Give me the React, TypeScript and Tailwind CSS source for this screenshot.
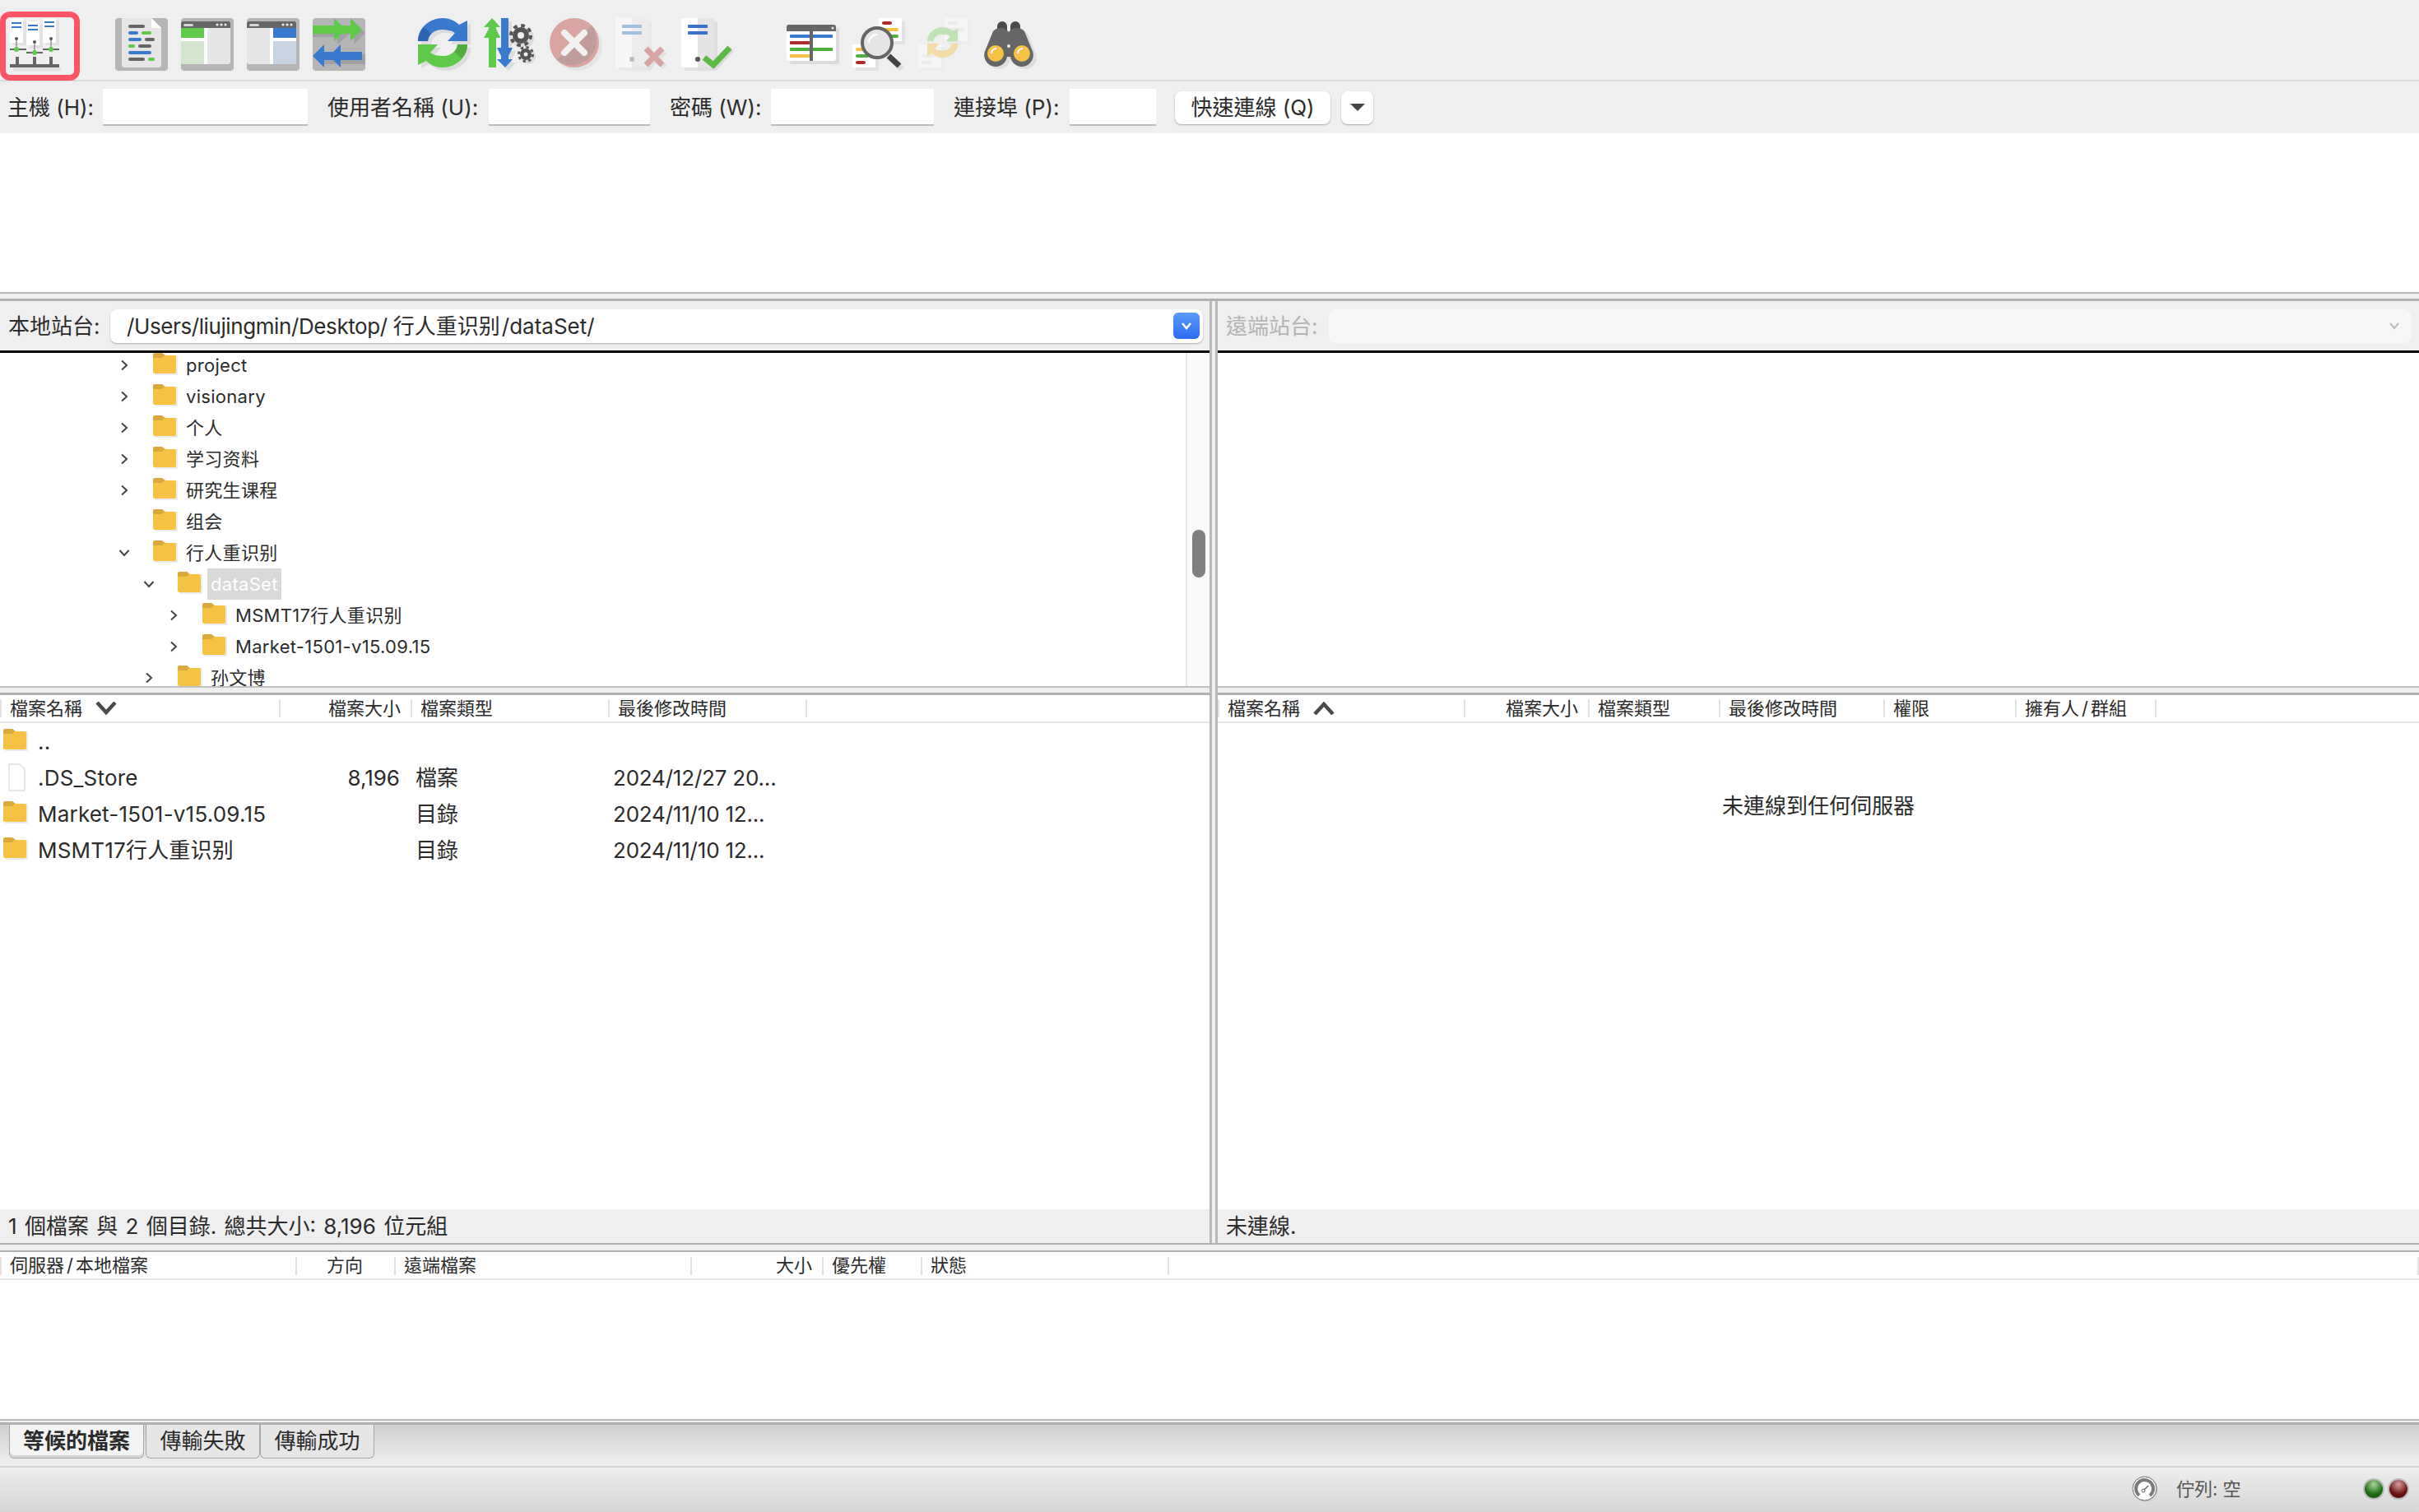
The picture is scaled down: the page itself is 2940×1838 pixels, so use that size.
import type { ReactNode } from "react"

const Folder = ({ className = "" }: { className?: string }) => (
    <svg width="30" height="27" viewBox="0 0 30 27" className={className}>
        <rect x="2" y="3" width="28" height="24" fill="#ececec" />
        <path d="M0 2a2 2 0 0 1 2-2h9l4 3v4H0z" fill="#dba93a" />
        <path d="M0 6h11l3-3h12a2 2 0 0 1 2 2v18a2 2 0 0 1-2 2H2a2 2 0 0 1-2-2z" fill="#f6c244" />
    </svg>
)

const Chevron = ({ open }: { open?: boolean }) => (
    <svg width="14" height="14" viewBox="0 0 14 14" fill="none" stroke="#444" strokeWidth="2">
        {open ? <path d="M1.5 4l5.5 6 5.5-6" /> : <path d="M4 1.5l6 5.5-6 5.5" />}
    </svg>
)

const SortArrow = ({ up }: { up?: boolean }) => (
    <svg width="26" height="16" viewBox="0 0 26 16" fill="none" stroke="#4a4a4a" strokeWidth="4.5">
        {up ? <path d="M2 15l11-12 11 12" /> : <path d="M2 1l11 12 11-12" />}
    </svg>
)

const SiteManagerIcon = () => (
    <svg width="64" height="64" viewBox="0 0 64 64">
        <path d="M6 3h16v30H6zM26 7h16v30H26zM46 3h16v30H46zM6 60h60v4H6z" fill="#e2e2e2" />
        <path d="M2 1h16v29H2zM42 1h16v29H42zM22 4h16v29H22z" fill="#fff" />
        <path d="M4 5h12v2H4zM4 10h12v2H4zM44 4h12v2H44zM44 9h12v2H44zM24 8h12v2H24zM24 13h12v2H24z" fill="#3a7ace" />
        <path d="M2 37h20v2H2zM42 37h20v2H42zM22 41h20v2H22zM9.5 25h1v13h-1zM51.5 25h1v13h-1zM31.5 29h1v13h-1zM9 47h4v9H9zM30 47h4v9h-4zM50 47h4v9h-4zM2 56h60v4H2z" fill="#666" />
        <circle cx="10" cy="25" r="2" fill="#555" />
        <circle cx="32" cy="29" r="2" fill="#555" />
        <circle cx="52" cy="25" r="2" fill="#555" />
        <circle cx="10" cy="38" r="3" fill="#5fc94a" />
        <circle cx="32" cy="42" r="3" fill="#5fc94a" />
        <circle cx="52" cy="38" r="3" fill="#5fc94a" />
    </svg>
)

const MessageLogIcon = () => (
    <svg width="64" height="64" viewBox="0 0 64 64">
        <rect width="64" height="64" rx="4" fill="#b5b5b5" />
        <path d="M8 0h36l12 12v45a3 3 0 0 1-3 3H11a3 3 0 0 1-3-3z" fill="#e6e6e6" />
        <path d="M44 0l12 12H44z" fill="#fff" />
        <rect x="16" y="8" width="20" height="4" rx="2" fill="#666" />
        <rect x="16" y="16" width="12" height="4" rx="2" fill="#3a7ace" />
        <rect x="32" y="16" width="12" height="4" rx="2" fill="#5fc94a" />
        <rect x="16" y="24" width="16" height="4" rx="2" fill="#3a7ace" />
        <rect x="36" y="24" width="12" height="4" rx="2" fill="#666" />
        <rect x="16" y="32" width="8" height="4" rx="2" fill="#5fc94a" />
        <rect x="28" y="32" width="16" height="4" rx="2" fill="#666" />
        <rect x="16" y="40" width="28" height="4" rx="2" fill="#3a7ace" />
        <rect x="16" y="48" width="20" height="4" rx="2" fill="#666" />
        <rect x="40" y="48" width="8" height="4" rx="2" fill="#5fc94a" />
    </svg>
)

const PaneIcon = ({ side }: { side: "left" | "right" }) => {
    const strong = side === "left" ? "#5fc94a" : "#3a7ace"
    const soft = side === "left" ? "#d4e6d0" : "#c8d4e2"
    const x = side === "left" ? 0 : 32
    return (
        <svg width="64" height="64" viewBox="0 0 64 64">
            <rect width="64" height="64" rx="4" fill="#b5b5b5" />
            <path d="M0 12h60v41a3 3 0 0 1-3 3H3a3 3 0 0 1-3-3z" fill="#e6e6e6" />
            <path d="M3 4h54a3 3 0 0 1 3 3v5H0V7a3 3 0 0 1 3-3z" fill="#666" />
            <rect x="3" y="7" width="12" height="3" rx="1.5" fill="#d5d5d5" />
            <circle cx="44" cy="8" r="1.5" fill="#eee" />
            <circle cx="49" cy="8" r="1.5" fill="#eee" />
            <circle cx="54" cy="8" r="1.5" fill="#eee" />
            <rect x={x} y="12" width="28" height="12" fill={strong} />
            <rect x={x} y="24" width="28" height="4" fill="#fff" />
            <path d={side === "left" ? "M0 28h28v28H3a3 3 0 0 1-3-3z" : "M32 28h28v25a3 3 0 0 1-3 3H32z"} fill={soft} />
            <rect x="28" y="12" width="4" height="44" fill="#fff" />
        </svg>
    )
}

const QueueArrowsIcon = () => (
    <svg width="64" height="64" viewBox="0 0 64 64">
        <rect width="64" height="64" rx="4" fill="#b5b5b5" />
        <path d="M0 13h30v-9l16 14-16 14v-9H0zM50 4l14 14-14 14z" fill="#a2a2a2" />
        <path d="M10 44h54v12H10z" fill="#a2a2a2" />
        <path d="M0 9h26V0l14 14-14 14v-9H0zM46 0l14 14-14 14z" fill="#5fc94a" />
        <path d="M26 9h24v10H26z" fill="#5fc94a" />
        <path d="M60 41H34v-9L20 46l14 14v-9h26zM14 32L0 46l14 14z" fill="#3a7ace" />
        <path d="M14 41h20v10H14z" fill="#3a7ace" />
    </svg>
)

const blueArc = "M4 28C4 12 18 0 34 0c8 0 15 3 20 8l10-5v25H40l9-10c-4-3-10-4-16-4-9 0-16 6-17 14z"

const RefreshIcon = () => (
    <svg width="68" height="64" viewBox="0 0 68 64">
        <path d={blueArc} fill="#dcdcdc" transform="translate(4 4)" />
        <path d={blueArc} fill="#dcdcdc" transform="translate(4 4) rotate(180 34 30)" />
        <path d={blueArc} fill="#3a7ace" />
        <path d="M4 28c0-6 2-12 7-17l9 8c-2 2-4 5-4 9z" fill="#2f63b3" />
        <path d={blueArc} fill="#5fc94a" transform="rotate(180 34 30)" />
        <path d="M64 32c0 6-2 12-7 17l-9-8c2-2 4-5 4-9z" fill="#52ad3f" />
    </svg>
)

const SyncIcon = () => (
    <svg width="68" height="64" viewBox="0 0 68 64">
        <path d="M29 4h9v36h5l-5 10v4h5l-9 10-10-10h5v-4l-5-10h5z" fill="#dcdcdc" />
        <path d="M14 0l10 11h-5v2l5 11h-5v36h-9V24H4l6-11v-2H4z" fill="#5fc94a" />
        <path d="M25 0h9v36h5l-5 10v4h5l-9 10-10-10h5v-4l-5-10h5z" fill="#3a7ace" />
        <circle cx="52" cy="24" r="13" fill="#dcdcdc" />
        <circle cx="58" cy="47" r="9" fill="#dcdcdc" />
        <circle cx="49" cy="21" r="10" fill="#555" />
        <circle cx="49" cy="21" r="12" fill="none" stroke="#555" strokeWidth="4" strokeDasharray="4.7 4.7" />
        <circle cx="49" cy="21" r="4" fill="#efefef" />
        <circle cx="55" cy="44" r="7" fill="#555" />
        <circle cx="55" cy="44" r="8.5" fill="none" stroke="#555" strokeWidth="3" strokeDasharray="3.3 3.4" />
        <circle cx="55" cy="44" r="2.5" fill="#efefef" />
    </svg>
)

const CancelIcon = () => (
    <svg width="68" height="64" viewBox="0 0 68 64">
        <circle cx="38" cy="34" r="30" fill="#e4e4e4" />
        <circle cx="34" cy="30" r="30" fill="#d8a5a2" />
        <path d="M55 9A30 30 0 0 1 13 51z" fill="#c19c9c" />
        <path d="M22 18l24 24M46 18L22 42" stroke="#f1f1f1" strokeWidth="8" strokeLinecap="round" />
    </svg>
)

const ServerShape = ({ dark }: { dark?: boolean }) => (
    <>
        <rect x="8" y="4" width="40" height="60" rx="2" fill={dark ? "#dfdfdf" : "#e8e8e8"} />
        <rect x="4" y="0" width="40" height="60" rx="2" fill={dark ? "#e4e4e4" : "#ececec"} />
        <path d="M6 0h18v60H6a2 2 0 0 1-2-2V2a2 2 0 0 1 2-2z" fill={dark ? "#fff" : "#f6f6f6"} />
        <rect x="12" y="8" width="24" height="4" rx="1" fill={dark ? "#3a72c8" : "#a5bedf"} />
        <rect x="12" y="16" width="24" height="4" rx="1" fill={dark ? "#3a72c8" : "#a5bedf"} />
        <circle cx="24" cy="50" r="3" fill={dark ? "#555" : "#bbb"} />
    </>
)

const RemoveQueueIcon = () => (
    <svg width="68" height="64" viewBox="0 0 68 64">
        <ServerShape />
        <path d="M44 40l20 20M64 40L44 60" stroke="#e2e2e2" strokeWidth="7" />
        <path d="M41 37l20 20M61 37L41 57" stroke="#d6a4a2" strokeWidth="7" />
    </svg>
)

const ProcessQueueIcon = () => (
    <svg width="68" height="64" viewBox="0 0 68 64">
        <ServerShape dark />
        <path d="M35 50l10 10 20-22" fill="none" stroke="#dcdcdc" strokeWidth="7" />
        <path d="M32 48l11 9 20-21" fill="none" stroke="#5bba44" strokeWidth="7" />
    </svg>
)

const FilterIcon = () => (
    <svg width="68" height="64" viewBox="0 0 68 64">
        <rect x="8" y="12" width="60" height="44" rx="3" fill="#dcdcdc" />
        <rect x="4" y="8" width="60" height="44" rx="3" fill="#fff" />
        <path d="M7 8h54a3 3 0 0 1 3 3v5H4v-5a3 3 0 0 1 3-3z" fill="#666" />
        <circle cx="60" cy="12" r="1.5" fill="#e8e8e8" />
        <rect x="8" y="20" width="52" height="4" rx="1" fill="#3a7ace" />
        <rect x="8" y="28" width="24" height="4" rx="1" fill="#b02c2c" />
        <rect x="8" y="36" width="52" height="4" rx="1" fill="#4fb13b" />
        <rect x="8" y="44" width="24" height="4" rx="1" fill="#f6c244" />
        <rect x="32" y="16" width="4" height="36" fill="#666" />
    </svg>
)

const SearchIcon = () => (
    <svg width="68" height="64" viewBox="0 0 68 64">
        <rect x="40" y="4" width="28" height="28" fill="#e2e2e2" />
        <rect x="36" y="0" width="28" height="28" fill="#fff" />
        <rect x="40" y="4" width="12" height="4" rx="2" fill="#b02c2c" />
        <rect x="40" y="12" width="20" height="4" rx="2" fill="#f6c244" />
        <rect x="40" y="20" width="20" height="4" rx="2" fill="#4fb13b" />
        <rect x="8" y="36" width="28" height="28" fill="#e2e2e2" />
        <rect x="4" y="32" width="28" height="28" fill="#fff" />
        <rect x="8" y="36" width="12" height="4" rx="2" fill="#f6c244" />
        <rect x="8" y="44" width="16" height="4" rx="2" fill="#4fb13b" />
        <rect x="8" y="52" width="12" height="4" rx="2" fill="#b02c2c" />
        <path d="M52 50l12 12" stroke="#dcdcdc" strokeWidth="7" />
        <circle cx="34" cy="30" r="18" fill="#e6e6e6" stroke="#666" strokeWidth="4" />
        <path d="M24 30a10 10 0 0 1 10-10" fill="none" stroke="#fff" strokeWidth="2" />
        <path d="M48 46l13 12" stroke="#444" strokeWidth="7" />
    </svg>
)

const CompareIcon = () => (
    <svg width="68" height="64" viewBox="0 0 68 64">
        <rect x="40" y="4" width="28" height="28" fill="#ececec" />
        <rect x="36" y="0" width="28" height="28" fill="#f5f5f5" />
        <rect x="40" y="4" width="12" height="4" rx="2" fill="#ebebeb" />
        <rect x="40" y="12" width="20" height="4" rx="2" fill="#ebebeb" />
        <rect x="8" y="36" width="28" height="28" fill="#ececec" />
        <rect x="4" y="32" width="28" height="28" fill="#f5f5f5" />
        <rect x="8" y="44" width="16" height="4" rx="2" fill="#ebebeb" />
        <rect x="8" y="52" width="12" height="4" rx="2" fill="#ebebeb" />
        <g transform="translate(12.5 11) scale(.62)">
            <path d={blueArc} fill="#bfe3b4" />
            <path d={blueArc} fill="#f4dca8" transform="rotate(180 34 30)" />
        </g>
    </svg>
)

const binocularBody = "M15 16c5-6 15-5 19 1 4-6 14-7 19-1l9 22a14 14 0 1 1-26 9h-4a14 14 0 1 1-26-9z"

const BinocularsIcon = () => (
    <svg width="68" height="64" viewBox="0 0 68 64">
        <path d={binocularBody} fill="#dedede" transform="translate(4 3)" />
        <rect x="20" y="4" width="12" height="18" rx="6" fill="#4a4a4a" />
        <rect x="36" y="4" width="12" height="18" rx="6" fill="#4a4a4a" />
        <path d={binocularBody} fill="#666" />
        <circle cx="18" cy="43" r="10" fill="#f6c244" />
        <circle cx="50" cy="43" r="10" fill="#f6c244" />
        <path d="M13 43a6 6 0 0 1 6-6M45 43a6 6 0 0 1 6-6" fill="none" stroke="#fff" strokeWidth="2" />
        <circle cx="34" cy="34" r="2" fill="#eee" />
    </svg>
)

const GaugeIcon = () => (
    <svg width="32" height="32" viewBox="0 0 32 32">
        <circle cx="17" cy="17" r="14.5" fill="#ccc" />
        <circle cx="15.5" cy="15.5" r="14.5" fill="#fff" stroke="#666" />
        <circle cx="15.5" cy="15.5" r="10.5" fill="none" stroke="#7a7a7a" strokeWidth="4" strokeDasharray="52 14" transform="rotate(128 15.5 15.5)" />
        <circle cx="14" cy="18" r="2" fill="none" stroke="#666" />
        <path d="M15 17l5-5" stroke="#666" strokeWidth="1.5" />
    </svg>
)

const Field = ({ w }: { w: string }) => (
    <div className={`h-[45px] bg-white border-b-2 border-[#bdbdbd] ${w}`} />
)

const Cell = ({ w, align, children }: { w: string; align?: "right" | "center"; children?: ReactNode }) => (
    <div className={`h-[22px] flex items-center whitespace-nowrap border-l-2 border-[#e2e2e2] pl-[10px] pr-3 ${w} ${align === "right" ? "justify-end" : align === "center" ? "justify-center" : ""}`}>
        {children}
    </div>
)

const treeRows = [
    { name: "project", level: 0, arrow: "closed" },
    { name: "visionary", level: 0, arrow: "closed" },
    { name: "个人", level: 0, arrow: "closed" },
    { name: "学习资料", level: 0, arrow: "closed" },
    { name: "研究生课程", level: 0, arrow: "closed" },
    { name: "组会", level: 0, arrow: "" },
    { name: "行人重识别", level: 0, arrow: "open" },
    { name: "dataSet", level: 1, arrow: "open", selected: true },
    { name: "MSMT17行人重识别", level: 2, arrow: "closed" },
    { name: "Market-1501-v15.09.15", level: 2, arrow: "closed" },
    { name: "孙文博", level: 1, arrow: "closed" },
]

const localFiles = [
    { name: "..", size: "", type: "", date: "", folder: true },
    { name: ".DS_Store", size: "8,196", type: "檔案", date: "2024/12/27 20...", folder: false },
    { name: "Market-1501-v15.09.15", size: "", type: "目錄", date: "2024/11/10 12...", folder: true },
    { name: "MSMT17行人重识别", size: "", type: "目錄", date: "2024/11/10 12...", folder: true },
]

const TreeRow = ({ row }: { row: (typeof treeRows)[number] }) => (
    <div className={`h-[38px] shrink-0 flex items-center text-[22px] tracking-[0.3px] ${row.level === 0 ? "pl-[144px]" : row.level === 1 ? "pl-[174px]" : "pl-[204px]"}`}>
        <span className="w-[42px] flex">
            {row.arrow && <Chevron open={row.arrow === "open"} />}
        </span>
        <Folder className="-mt-1" />
        <span className={`ml-[6px] h-[38px] leading-[38px] px-1 whitespace-nowrap ${row.selected ? "bg-[#d9d9d9] text-white" : ""}`}>
            {row.name}
        </span>
    </div>
)

const App = () => {
    return (
        <div className="w-[2940px] h-[1838px] flex flex-col overflow-hidden bg-[#efefef] text-[#2b2b2b] [font-family:Inter,'Noto_Sans_CJK_TC',sans-serif]">
            {/* TOOLBAR */}
            <div className="h-[99px] shrink-0 flex border-b-2 border-[#dcdcdc]">
                <div className="mt-[14px] h-[84px] w-[97px] border-[7px] border-[#ff5468] rounded-[12px] pl-[3px] pt-px">
                    <SiteManagerIcon />
                </div>
                <div className="flex gap-4 pt-[22px] pl-[43px]">
                    <MessageLogIcon />
                    <PaneIcon side="left" />
                    <PaneIcon side="right" />
                    <QueueArrowsIcon />
                </div>
                <div className="flex gap-3 pt-[22px] pl-[60px]">
                    <RefreshIcon />
                    <SyncIcon />
                    <CancelIcon />
                    <RemoveQueueIcon />
                    <ProcessQueueIcon />
                </div>
                <div className="flex gap-3 pt-[22px] pl-[60px]">
                    <FilterIcon />
                    <SearchIcon />
                    <CompareIcon />
                    <BinocularsIcon />
                </div>
            </div>

            {/* QUICK CONNECT */}
            <div className="h-[63px] shrink-0 flex items-center text-[26px] whitespace-nowrap">
                <span className="ml-[9px] w-[116px]">主機 (H):</span>
                <Field w="w-[249px]" />
                <span className="ml-6 w-[196px]">使用者名稱 (U):</span>
                <Field w="w-[196px]" />
                <span className="ml-6 w-[123px]">密碼 (W):</span>
                <Field w="w-[198px]" />
                <span className="ml-6 w-[141px]">連接埠 (P):</span>
                <Field w="w-[105px]" />
                <button className="ml-[23px] h-10 w-[189px] bg-white rounded-lg shadow-[0_1px_2px_#aaa] text-center">快速連線 (Q)</button>
                <button className="ml-[13px] h-10 w-[39px] bg-white rounded-lg shadow-[0_1px_2px_#aaa] flex items-center justify-center">
                    <span className="w-0 h-0 border-x-[9px] border-x-transparent border-t-[9px] border-t-[#444]" />
                </button>
            </div>

            {/* LOG */}
            <div className="h-[195px] shrink-0 bg-white border-b-2 border-[#b8b8b8]" />
            <div className="h-[9px] shrink-0 border-b-[3px] border-[#b0b0b0]" />

            {/* SITES */}
            <div className="h-[1145px] shrink-0 flex">
                <div className="w-[1470px] shrink-0 flex flex-col">
                    {/* Local path */}
                    <div className="h-[63px] shrink-0 flex items-center text-[26px] border-b-[3px] border-black">
                        <span className="ml-[10px] w-[124px] whitespace-nowrap">本地站台:</span>
                        <div className="h-[41px] w-[1328px] flex items-center bg-white rounded-lg shadow-[0_1px_2px_#aaa] pl-5 pr-1">
                            <span className="flex-1 whitespace-nowrap">
                                <span className="tracking-[-0.4px]">/Users/liujingmin/Desktop/</span>
                                <span className="ml-[7px] mr-[2px]">行人重识别</span>
                                /dataSet/
                            </span>
                            <span className="h-8 w-8 rounded-md bg-gradient-to-b from-[#5d9bf9] to-[#2a6cf0] flex items-center justify-center">
                                <svg width="16" height="16" viewBox="0 0 16 16" fill="none" stroke="#fff" strokeWidth="2.5"><path d="M3 5l5 6 5-6" /></svg>
                            </span>
                        </div>
                    </div>
                    {/* Local tree */}
                    <div className="h-[407px] shrink-0 flex bg-white overflow-hidden border-b-2 border-[#c0c0c0]">
                        <div className="flex-1 flex flex-col -mt-1">
                            {treeRows.map((row) => (
                                <TreeRow key={row.name} row={row} />
                            ))}
                        </div>
                        <div className="w-[29px] bg-[#fafafa] border-l-2 border-[#e8e8e8] pl-[6px] pt-[215px]">
                            <div className="h-[58px] w-4 rounded-full bg-[#808080]" />
                        </div>
                    </div>
                    <div className="h-[9px] shrink-0 border-b-[3px] border-[#b0b0b0]" />
                    {/* Local list header */}
                    <div className="h-[34px] shrink-0 bg-white flex items-center text-[22px] border-b-2 border-[#e6e6e6]">
                        <Cell w="w-[339px]"><span>檔案名稱</span><span className="ml-[16px]"><SortArrow /></span></Cell>
                        <Cell w="w-[160px]" align="right">檔案大小</Cell>
                        <Cell w="w-[240px]">檔案類型</Cell>
                        <Cell w="w-[240px]">最後修改時間</Cell>
                        <div className="flex-1 h-[22px] border-l-2 border-[#e2e2e2]" />
                    </div>
                    {/* Local list */}
                    <div className="flex-1 bg-white flex flex-col text-[26px]">
                        {localFiles.map((file) => (
                            <div key={file.name} className="h-11 shrink-0 flex items-center whitespace-nowrap">
                                <div className="w-[46px] pl-1 flex">
                                    {file.folder ? (
                                        <Folder className="-mt-1" />
                                    ) : (
                                        <svg width="30" height="34" viewBox="0 0 30 34"><path d="M7 1h13l6 6v26H7z" fill="#fff" stroke="#e0e0e0" strokeWidth="1.5" /></svg>
                                    )}
                                </div>
                                <div className="w-[394px] tracking-[0.2px]">{file.name}</div>
                                <div className="w-[46px] flex justify-end overflow-visible whitespace-nowrap">{file.size}</div>
                                <div className="ml-[19px] w-[240px]">{file.type}</div>
                                <div className="tracking-[-0.2px]">{file.date}</div>
                            </div>
                        ))}
                    </div>
                    <div className="h-[41px] shrink-0 flex items-center pl-[10px] text-[26px] [word-spacing:2px]">1 個檔案 與 2 個目錄. 總共大小: 8,196 位元組</div>
                </div>

                {/* Splitter */}
                <div className="w-[10px] shrink-0 border-x-[3px] border-[#b8b8b8] bg-[#efefef]" />

                <div className="flex-1 flex flex-col">
                    {/* Remote path */}
                    <div className="h-[63px] shrink-0 flex items-center text-[26px] border-b-[3px] border-black">
                        <span className="ml-[10px] w-[125px] whitespace-nowrap text-[#b4b4b4]">遠端站台:</span>
                        <div className="h-[41px] w-[1315px] flex items-center justify-end bg-[#f7f7f7] rounded-lg pr-3">
                            <svg width="16" height="16" viewBox="0 0 16 16" fill="none" stroke="#bcbcbc" strokeWidth="2"><path d="M3 5l5 6 5-6" /></svg>
                        </div>
                    </div>
                    <div className="h-[407px] shrink-0 bg-white border-b-2 border-[#c0c0c0]" />
                    <div className="h-[9px] shrink-0 border-b-[3px] border-[#b0b0b0]" />
                    {/* Remote list header */}
                    <div className="h-[34px] shrink-0 bg-white flex items-center text-[22px] border-b-2 border-[#e6e6e6]">
                        <Cell w="w-[299px]"><span>檔案名稱</span><span className="ml-[16px]"><SortArrow up /></span></Cell>
                        <Cell w="w-[151px]" align="right">檔案大小</Cell>
                        <Cell w="w-[159px]">檔案類型</Cell>
                        <Cell w="w-[200px]">最後修改時間</Cell>
                        <Cell w="w-[160px]">權限</Cell>
                        <Cell w="w-[170px]"><span>擁有人</span><span className="mx-[3px]">/</span><span>群組</span></Cell>
                        <div className="flex-1 h-[22px] border-l-2 border-[#e2e2e2]" />
                    </div>
                    <div className="flex-1 bg-white flex justify-center pt-[83px] text-[26px] leading-[36px]">未連線到任何伺服器</div>
                    <div className="h-[41px] shrink-0 flex items-center pl-[10px] text-[26px]">未連線.</div>
                </div>
            </div>

            {/* QUEUE */}
            <div className="h-[11px] shrink-0 border-y-2 border-[#b0b0b0]" />
            <div className="h-[34px] shrink-0 bg-white flex items-center pt-px text-[22px] border-b-2 border-[#e6e6e6]">
                <Cell w="w-[359px]"><span>伺服器</span><span className="mx-[3px]">/</span><span>本地檔案</span></Cell>
                <Cell w="w-[120px]" align="center">方向</Cell>
                <Cell w="w-[360px]">遠端檔案</Cell>
                <Cell w="w-[160px]" align="right">大小</Cell>
                <Cell w="w-[120px]">優先權</Cell>
                <Cell w="w-[300px]">狀態</Cell>
                <div className="flex-1 h-[22px] border-x-2 border-[#e2e2e2]" />
            </div>
            <div className="h-[171px] shrink-0 bg-white border-b-2 border-[#b8b8b8]" />
            <div className="h-[5px] shrink-0 border-b-[3px] border-[#b0b0b0]" />

            {/* TABS */}
            <div className="h-[52px] shrink-0 flex items-start pl-[11px] gap-[2px] bg-gradient-to-b from-[#cfcfcf] to-[#f1f1f1] border-b-2 border-[#d4d4d4] text-[26px]">
                <div className="h-[41px] w-[164px] flex items-center justify-center pb-[2px] font-bold bg-[#f4f4f4] rounded-b-md border border-t-0 border-[#a8a8a8] shadow-[inset_0_-3px_0_#d6d6d6]">等候的檔案</div>
                <div className="h-[41px] w-[139px] flex items-center justify-center pb-[2px] bg-[#e6e6e6] rounded-b-md border border-t-0 border-[#a8a8a8]">傳輸失敗</div>
                <div className="h-[41px] w-[139px] -ml-[2px] flex items-center justify-center pb-[2px] bg-[#e6e6e6] rounded-b-md border border-t-0 border-[#a8a8a8]">傳輸成功</div>
            </div>

            {/* STATUS BAR */}
            <div className="flex-1 flex items-center bg-gradient-to-b from-[#eeeeee] to-[#d6d6d6] pl-[2591px] pb-[2px] text-[22px] text-[#555]">
                <GaugeIcon />
                <span className="ml-[22px] w-[229px] whitespace-nowrap">佇列: 空</span>
                <span className="h-[22px] w-[22px] rounded-full bg-[radial-gradient(circle_at_50%_25%,#a9d89b,#1f6a12_60%,#154d0c)] shadow-[0_0_0_2px_#bbb]" />
                <span className="ml-2 h-[22px] w-[22px] rounded-full bg-[radial-gradient(circle_at_50%_25%,#d8a0a0,#6d1212_60%,#4c0808)] shadow-[0_0_0_2px_#bbb]" />
            </div>
        </div>
    )
}

export default App
